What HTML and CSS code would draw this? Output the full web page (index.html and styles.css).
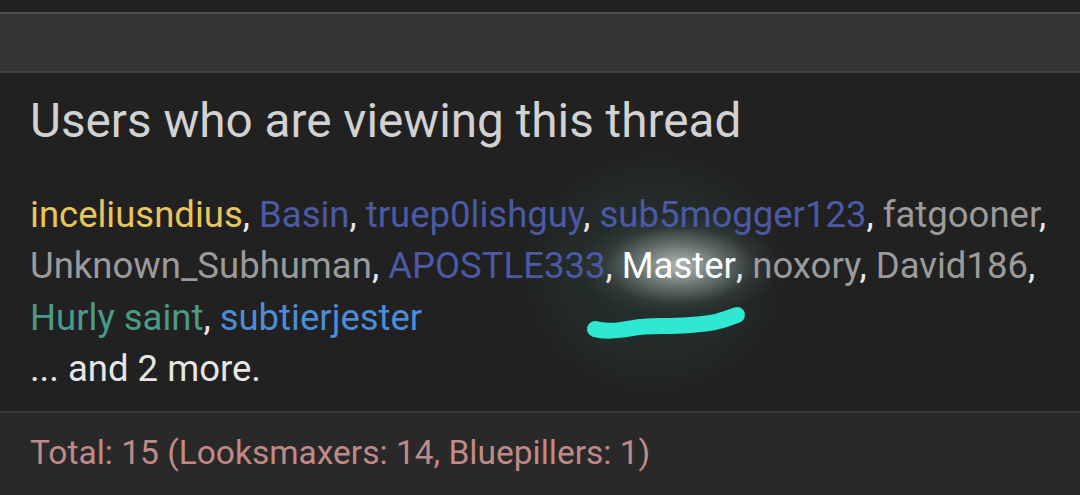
FILE: index.html
```html
<!DOCTYPE html>
<html>
<head>
<meta charset="utf-8">
<link rel="stylesheet" href="styles.css">
</head>
<body>
<div class="page">
  <div class="topstrip"></div>
  <div class="navbar"></div>
  <section class="block">
    <h3 class="title">Users who are viewing this thread</h3>
    <p class="list"><a class="u gold">inceliusndius</a>, <a class="u blue">Basin</a>, <a class="u blue">truep0lishguy</a>, <a class="u blue">sub5mogger123</a>, <a class="u grey">fatgooner</a>, <a class="u grey">Unknown_Subhuman</a>, <a class="u blue">APOSTLE333</a>, <a class="u master">Master<svg class="scribble" width="170" height="40" viewBox="0 0 170 40"><path d="M10 26 C 20 29, 32 28, 48 25 S 78 24, 105 22 S 135 18, 152 12" fill="none" stroke="#2ee8d2" stroke-width="16" stroke-linecap="round"/></svg></a>, <a class="u grey">noxory</a>, <a class="u grey">David186</a>, <a class="u teal">Hurly saint</a>, <a class="u sky">subtierjester</a><br>... and 2 more.</p>
  </section>
  <footer class="foot">Total: 15 (Looksmaxers: 14, Bluepillers: 1)</footer>
</div>
</body>
</html>
```
FILE: styles.css
```css
html, body { margin: 0; padding: 0; }
body { background: #212121; font-family: Roboto, "Noto Sans", sans-serif; width: 1080px; height: 495px; overflow: hidden; }
.page { display: flex; flex-direction: column; height: 495px; }
.topstrip { height: 12px; background: #212121; border-bottom: 2px solid #4e4e4e; }
.navbar { height: 57px; background: #343434; border-bottom: 2px solid #404040; }
.block { flex: 1; padding: 20px 28px 0 30px; }
.title { margin: 0; font-weight: 400; font-size: 47.7px; line-height: 56px; color: #d2d2d2; }
.list { margin: 40px 0 0; position: relative; z-index: 1; font-size: 36.5px; line-height: 51.4px; color: #e6e6e6; }
.u { text-decoration: none; }
.gold { color: #e9c65c; }
.blue { color: #4b5aa6; }
.grey { color: #9b9b9b; }
.teal { color: #4b9b89; }
.sky { color: #4b8dd8; }
.master { position: relative; color: #ffffff; }
.master::before { content: ""; position: absolute; z-index: -1; left: -45px; right: -45px; top: -30px; bottom: -30px; background: radial-gradient(closest-side, rgba(225,232,228,0.75) 0%, rgba(170,182,178,0.5) 40%, rgba(90,100,98,0.2) 75%, rgba(40,45,45,0) 100%); }
.master::after { content: ""; position: absolute; z-index: -2; left: 50%; top: 50%; width: 270px; height: 250px; margin-left: -160px; margin-top: -118px; border-radius: 45%; background: radial-gradient(closest-side, rgba(38,48,47,1) 0%, rgba(36,44,43,0.9) 65%, rgba(33,33,33,0) 100%); }
.scribble { position: absolute; left: -37px; top: 59px; }
.foot { height: 82px; border-top: 2px solid #3a3a3a; background: #292929; padding: 0 30px; font-size: 33.5px; line-height: 80px; color: #c08a88; }
```
